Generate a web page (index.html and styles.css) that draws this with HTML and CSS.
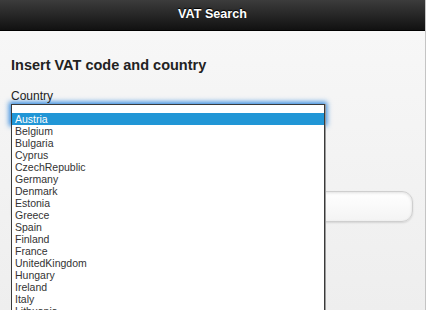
FILE: index.html
```html
<!DOCTYPE html>
<html>
<head>
<meta charset="utf-8">
<title>VAT Search</title>
<link rel="stylesheet" href="styles.css">
</head>
<body>
<div class="page">
  <header class="bar"><h1 class="bar-title">VAT Search</h1></header>
  <main class="content">
    <h3 class="heading">Insert VAT code and country</h3>
    <label class="field-label">Country</label>
    <div class="select-btn"></div>
    <div class="text-input"></div>
  </main>
</div>
<ul class="listbox">
  <li class="opt selected">Austria</li>
  <li class="opt">Belgium</li>
  <li class="opt">Bulgaria</li>
  <li class="opt">Cyprus</li>
  <li class="opt">CzechRepublic</li>
  <li class="opt">Germany</li>
  <li class="opt">Denmark</li>
  <li class="opt">Estonia</li>
  <li class="opt">Greece</li>
  <li class="opt">Spain</li>
  <li class="opt">Finland</li>
  <li class="opt">France</li>
  <li class="opt">UnitedKingdom</li>
  <li class="opt">Hungary</li>
  <li class="opt">Ireland</li>
  <li class="opt">Italy</li>
  <li class="opt">Lithuania</li>
</ul>
</body>
</html>
```

FILE: styles.css
```css
html {
  overflow: hidden;
  background: #ffffff;
}
body {
  margin: 0;
  font-family: "Liberation Sans", Arial, Helvetica, sans-serif;
  color: #222;
}
.page {
  width: 425px;
  height: 310px;
  border-right: 1px solid #c4c4c4;
  background: linear-gradient(#f8f8f8, #eeeeee);
}
.bar {
  height: 30px;
  border-bottom: 1px solid #000;
  background: linear-gradient(#3c3c3c, #111111);
}
.bar-title {
  margin: 0;
  text-align: center;
  color: #fff;
  font-size: 12.6px;
  font-weight: bold;
  line-height: 29px;
  text-shadow: 0 -1px 1px #000;
}
.content {
  padding: 0 12px 0 11px;
}
.heading {
  margin: 26px 0 0;
  font-size: 14.5px;
  line-height: 17px;
  font-weight: bold;
  color: #222;
}
.field-label {
  display: block;
  margin-top: 14.5px;
  font-size: 12px;
  line-height: 14px;
  color: #222;
}
.select-btn {
  margin-top: 1.5px;
  width: 314px;
  height: 20px;
  box-shadow: 0 0 5px 2px rgba(30, 125, 220, 0.9);
  background: #fff;
}
.text-input {
  margin-top: 67px;
  height: 29px;
  border: 1px solid #cfcfcf;
  border-radius: 11px;
  background: linear-gradient(#ffffff, #f4f4f4);
  box-shadow: inset 0 1px 3px rgba(0, 0, 0, 0.12), 0 1px 2px rgba(0, 0, 0, 0.12);
}
.listbox {
  position: absolute;
  top: 104px;
  left: 11px;
  width: 312px;
  height: 197px;
  margin: 0;
  padding: 8px 0 0;
  list-style: none;
  background: #fff;
  border: 1px solid #3a3a3a;
  border-bottom: none;
  box-shadow: 1px 0 0 #9a9a9a;
  overflow: hidden;
}
.opt {
  height: 12px;
  line-height: 12px;
  font-size: 10.5px;
  padding-left: 3px;
  color: #333;
  white-space: nowrap;
}
.opt.selected {
  background: #2196d6;
  color: #fff;
}
```
